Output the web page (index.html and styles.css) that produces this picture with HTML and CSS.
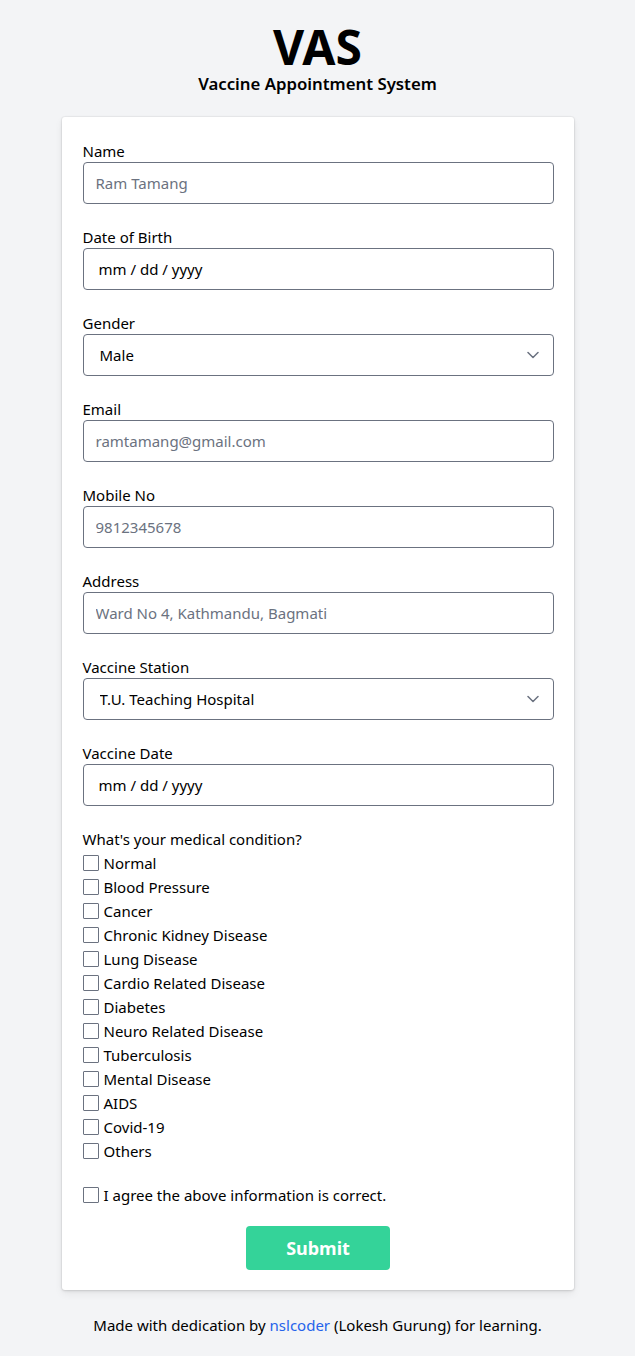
FILE: index.html
```html
<!DOCTYPE html>
<html lang="en">
<head>
<meta charset="utf-8">
<title>VAS</title>
<link rel="stylesheet" href="styles.css">
</head>
<body>
<header class="head">
  <h1 class="title">VAS</h1>
  <p class="subtitle">Vaccine Appointment System</p>
</header>
<main class="card">
  <form class="form">
    <div class="field">
      <label class="label">Name</label>
      <input class="input" type="text" placeholder="Ram Tamang">
    </div>
    <div class="field">
      <label class="label">Date of Birth</label>
      <input class="input date" type="text" value="mm / dd / yyyy">
    </div>
    <div class="field">
      <label class="label">Gender</label>
      <div class="select-wrap">
        <select class="input select"><option>Male</option><option>Female</option></select>
        <svg class="chev" width="12" height="8" viewBox="0 0 12 8"><path d="M1 1.5l5 5 5-5" fill="none" stroke="#6b7280" stroke-width="1.5" stroke-linecap="round" stroke-linejoin="round"/></svg>
      </div>
    </div>
    <div class="field">
      <label class="label">Email</label>
      <input class="input" type="text" placeholder="ramtamang@gmail.com">
    </div>
    <div class="field">
      <label class="label">Mobile No</label>
      <input class="input" type="text" placeholder="9812345678">
    </div>
    <div class="field">
      <label class="label">Address</label>
      <input class="input" type="text" placeholder="Ward No 4, Kathmandu, Bagmati">
    </div>
    <div class="field">
      <label class="label">Vaccine Station</label>
      <div class="select-wrap">
        <select class="input select"><option>T.U. Teaching Hospital</option></select>
        <svg class="chev" width="12" height="8" viewBox="0 0 12 8"><path d="M1 1.5l5 5 5-5" fill="none" stroke="#6b7280" stroke-width="1.5" stroke-linecap="round" stroke-linejoin="round"/></svg>
      </div>
    </div>
    <div class="field">
      <label class="label">Vaccine Date</label>
      <input class="input date" type="text" value="mm / dd / yyyy">
    </div>
    <div class="conditions">
      <p class="label">What's your medical condition?</p>
      <ul class="checks">
        <li><label class="check"><input type="checkbox" class="box"><span>Normal</span></label></li>
        <li><label class="check"><input type="checkbox" class="box"><span>Blood Pressure</span></label></li>
        <li><label class="check"><input type="checkbox" class="box"><span>Cancer</span></label></li>
        <li><label class="check"><input type="checkbox" class="box"><span>Chronic Kidney Disease</span></label></li>
        <li><label class="check"><input type="checkbox" class="box"><span>Lung Disease</span></label></li>
        <li><label class="check"><input type="checkbox" class="box"><span>Cardio Related Disease</span></label></li>
        <li><label class="check"><input type="checkbox" class="box"><span>Diabetes</span></label></li>
        <li><label class="check"><input type="checkbox" class="box"><span>Neuro Related Disease</span></label></li>
        <li><label class="check"><input type="checkbox" class="box"><span>Tuberculosis</span></label></li>
        <li><label class="check"><input type="checkbox" class="box"><span>Mental Disease</span></label></li>
        <li><label class="check"><input type="checkbox" class="box"><span>AIDS</span></label></li>
        <li><label class="check"><input type="checkbox" class="box"><span>Covid-19</span></label></li>
        <li><label class="check"><input type="checkbox" class="box"><span>Others</span></label></li>
      </ul>
    </div>
    <label class="check agree"><input type="checkbox" class="box"><span>I agree the above information is correct.</span></label>
    <div class="actions">
      <button type="button" class="submit">Submit</button>
    </div>
  </form>
</main>
<footer class="foot">Made with dedication by <a class="link" href="#">nslcoder</a> (Lokesh Gurung) for learning.</footer>
</body>
</html>
```
FILE: styles.css
```css
* { box-sizing: border-box; }
html, body { margin: 0; padding: 0; }
body {
  background: #f3f4f6;
  color: #000;
  font-family: "Noto Sans", "Open Sans", sans-serif;
  font-size: 15px;
  padding: 21px 0 19px;
}
.head { text-align: center; }
.title {
  margin: 0;
  font-size: 48px;
  line-height: 52px;
  font-weight: 700;
}
.subtitle {
  margin: 0;
  font-size: 16.8px;
  line-height: 22px;
  font-weight: 600;
}
.card {
  width: 512px;
  margin: 22px auto 0;
  background: #fff;
  border-radius: 3px;
  box-shadow: 0 0 0 1px rgba(0,0,0,0.03), 0 1px 3px rgba(0,0,0,0.12), 0 4px 8px rgba(0,0,0,0.06);
  padding: 23px 20px 20px 21px;
}
.form { display: flex; flex-direction: column; }
.field { display: flex; flex-direction: column; margin-bottom: 22px; }
.label {
  margin: 0;
  display: block;
  line-height: 22px;
  font-size: 15px;
}
.input {
  width: 100%;
  height: 42px;
  border: 1px solid #6b7280;
  border-radius: 4px;
  padding: 0 12px;
  font-family: inherit;
  font-size: 15px;
  color: #000;
  background: #fff;
  outline: none;
}
.input::placeholder { color: #6b7280; }
.date { padding-left: 15px; }
.select-wrap { position: relative; }
.select { appearance: none; -webkit-appearance: none; padding-left: 16px; }
.chev { position: absolute; right: 15px; top: 17px; pointer-events: none; }
.conditions { display: flex; flex-direction: column; }
.checks { list-style: none; margin: 1px 0 0; padding: 0; }
.check {
  display: flex;
  align-items: center;
  gap: 5px;
  line-height: 24px;
  height: 24px;
}
.box {
  appearance: none;
  -webkit-appearance: none;
  margin: 0;
  width: 16px;
  height: 16px;
  border: 1px solid #6b7280;
  border-radius: 1px;
  background: #fff;
}
.agree { margin-top: 20px; }
.actions { display: flex; justify-content: center; margin-top: 19px; }
.submit {
  width: 144px;
  height: 44px;
  border: none;
  border-radius: 4px;
  background: #34d399;
  color: #fff;
  font-family: inherit;
  font-size: 18px;
  font-weight: 700;
}
.foot {
  text-align: center;
  margin-top: 23px;
  line-height: 24px;
}
.link { color: #2563eb; text-decoration: none; }
```
